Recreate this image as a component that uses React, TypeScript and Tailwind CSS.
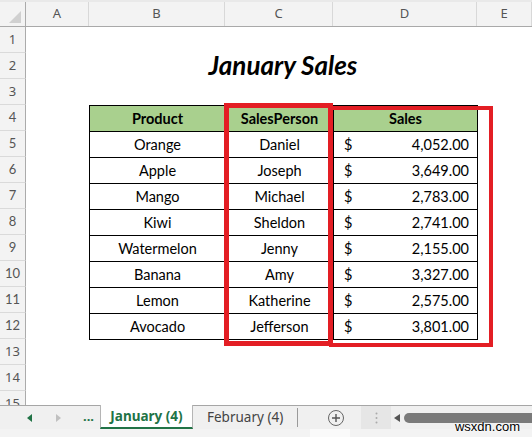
import React from 'react';

// Sheet data
const rows = [
  { product: 'Orange', person: 'Daniel', sales: '4,052.00' },
  { product: 'Apple', person: 'Joseph', sales: '3,649.00' },
  { product: 'Mango', person: 'Michael', sales: '2,783.00' },
  { product: 'Kiwi', person: 'Sheldon', sales: '2,741.00' },
  { product: 'Watermelon', person: 'Jenny', sales: '2,155.00' },
  { product: 'Banana', person: 'Amy', sales: '3,327.00' },
  { product: 'Lemon', person: 'Katherine', sales: '2,575.00' },
  { product: 'Avocado', person: 'Jefferson', sales: '3,801.00' },
];

const columns = [
  { key: 'A', w: 'w-[63px]' },
  { key: 'B', w: 'w-[136px]' },
  { key: 'C', w: 'w-[108px]' },
  { key: 'D', w: 'w-[144px]' },
  { key: 'E', w: 'w-[55px]' },
];

const uiFont = { fontFamily: '"Noto Sans", "Open Sans", sans-serif' };
const cellFont = { fontFamily: 'Lato, "Open Sans", sans-serif' };

function RowHeader({ n }: { n: number }) {
  return (
    <div className="w-[26px] h-[26px] shrink-0 flex items-center justify-center bg-[#f3f3f3] border-b border-[#dadada] border-r border-r-[#ababab] text-[13px] text-[#555]">
      {n}
    </div>
  );
}

function EmptyRow({ n, children }: { n: number; children?: React.ReactNode }) {
  return (
    <div className="flex h-[26px]">
      <RowHeader n={n} />
      {children ?? <div className="flex-1" />}
    </div>
  );
}

export default function App() {
  return (
    <div className="w-[532px] h-[437px] bg-white overflow-hidden relative" style={uiFont}>
      {/* Grid area */}
      <div className="h-[405px] overflow-hidden relative">
        <div className="h-[2px] bg-[#e9e9e9]" />
        {/* column headers */}
        <div className="flex h-[25px] bg-[#f3f3f3] border-b border-[#a9a9a9]">
          <div className="w-[26px] shrink-0 border-r border-[#ababab] relative">
            <div className="absolute right-[4px] bottom-[3px] w-0 h-0 border-l-[12px] border-l-transparent border-b-[12px] border-b-[#d0d0d0]" />
          </div>
          {columns.map((c) => (
            <div key={c.key} className={`${c.w} shrink-0 flex items-center justify-center border-r border-[#d8d8d8] text-[13px] text-[#555]`}>
              {c.key}
            </div>
          ))}
        </div>

        <EmptyRow n={1} />
        <EmptyRow n={2}>
          <div className="w-[63px] shrink-0" />
          <div className="w-[388px] shrink-0 flex items-end justify-center pb-[1px]">
            <span className="text-[26px] font-bold italic leading-none text-black" style={cellFont}>
              January Sales
            </span>
          </div>
        </EmptyRow>
        <EmptyRow n={3} />

        {/* header row 4 */}
        <div className="flex h-[26px]" style={cellFont}>
          <RowHeader n={4} />
          <div className="w-[63px] shrink-0" />
          <div className="w-[136px] shrink-0 bg-[#a9d08e] border-t border-l border-black flex items-center justify-center text-[14.5px] font-bold text-black">Product</div>
          <div className="w-[108px] shrink-0 bg-[#a9d08e] border-t border-l border-black flex items-center justify-center text-[14.5px] font-bold text-black">SalesPerson</div>
          <div className="w-[144px] shrink-0 bg-[#a9d08e] border-t border-l border-black shadow-[1px_0_0_#000] flex items-center justify-center text-[14.5px] font-bold text-black">Sales</div>
        </div>

        {rows.map((r, i) => {
          const last = i === rows.length - 1;
          return (
            <div key={r.product} className="flex h-[26px]" style={cellFont}>
              <RowHeader n={i + 5} />
              <div className="w-[63px] shrink-0" />
              <div className={`w-[136px] shrink-0 border-t border-l border-black flex items-center justify-center text-[14.5px] text-black ${last ? 'shadow-[0_1px_0_#000]' : ''}`}>
                {r.product}
              </div>
              <div className={`w-[108px] shrink-0 border-t border-l border-black flex items-center justify-center text-[14.5px] text-black ${last ? 'shadow-[0_1px_0_#000]' : ''}`}>
                {r.person}
              </div>
              <div className={`w-[144px] shrink-0 border-t border-l border-black flex items-end justify-between pl-[10px] pr-[8px] pb-[1px] text-[14.5px] text-black ${last ? 'shadow-[1px_0_0_#000,0_1px_0_#000,1px_1px_0_#000]' : 'shadow-[1px_0_0_#000]'}`}>
                <span>$</span>
                <span>{r.sales}</span>
              </div>
            </div>
          );
        })}

        <EmptyRow n={13} />
        <EmptyRow n={14} />
        <EmptyRow n={15} />

        {/* highlight boxes */}
        <div className="absolute left-[224px] top-[103px] w-[109px] h-[243px] border-[5px] border-[#e31e24]" />
        <div className="absolute left-[329px] top-[106px] w-[164px] h-[241px] border-[4px] border-[#e31e24]" />
      </div>

      {/* Sheet tabs */}
      <div className="h-[24px] flex items-stretch bg-[#f0f0f0]">
        <div className="w-[100px] shrink-0 border-t border-[#a6a6a6] flex items-center">
          <span className="ml-[27px] w-0 h-0 border-y-[4px] border-y-transparent border-r-[5px] border-r-[#217346]" />
          <span className="ml-[24px] w-0 h-0 border-y-[4px] border-y-transparent border-l-[5px] border-l-[#c0c0c0]" />
          <span className="ml-[22px] text-[13px] font-bold text-[#217346] leading-none pb-[3px]">...</span>
        </div>
        <div className="w-[93px] shrink-0 bg-white border-l border-r border-[#b5b5b5] border-b-2 border-b-[#217346] flex items-center justify-center text-[13.5px] font-bold text-[#217346]">
          January (4)
        </div>
        <div className="flex-1 border-t border-[#a6a6a6] flex items-center">
          <span className="ml-[14px] text-[13.5px] text-[#444]">February (4)</span>
          <span className="ml-[14px] w-px h-[19px] bg-[#9a9a9a]" />
          <span className="ml-[30px] w-[16px] h-[16px] rounded-full border-[1.5px] border-[#666] flex items-center justify-center">
            <svg width="10" height="10" viewBox="0 0 10 10">
              <path d="M5 1v8M1 5h8" stroke="#555" strokeWidth="1.4" />
            </svg>
          </span>
          <div className="ml-[17px] w-[30px] self-stretch bg-[#e6e6e6] flex items-center justify-center">
            <svg width="3" height="12" viewBox="0 0 3 12">
              <circle cx="1.5" cy="1.5" r="1" fill="#aaa" />
              <circle cx="1.5" cy="6" r="1" fill="#aaa" />
              <circle cx="1.5" cy="10.5" r="1" fill="#aaa" />
            </svg>
          </div>
          <span className="ml-[3px] w-0 h-0 border-y-[4px] border-y-transparent border-r-[6px] border-r-[#555]" />
          <div className="ml-[4px] flex-1 h-[10px] rounded-l-full bg-[#7a7a7a]" />
        </div>
      </div>
      <div className="h-[8px] bg-[#f3f3f3] relative">
        <div className="absolute left-[310px] top-0 w-[40px] h-full bg-[#fafafa]" />
      </div>

      {/* watermark */}
      <span className="absolute right-[12px] bottom-[4px] text-[13px] text-black leading-none [text-shadow:0_0_2px_#fff,0_0_2px_#fff]" style={{ fontFamily: '"Liberation Sans", sans-serif' }}>
        wsxdn.com
      </span>
    </div>
  );
}
